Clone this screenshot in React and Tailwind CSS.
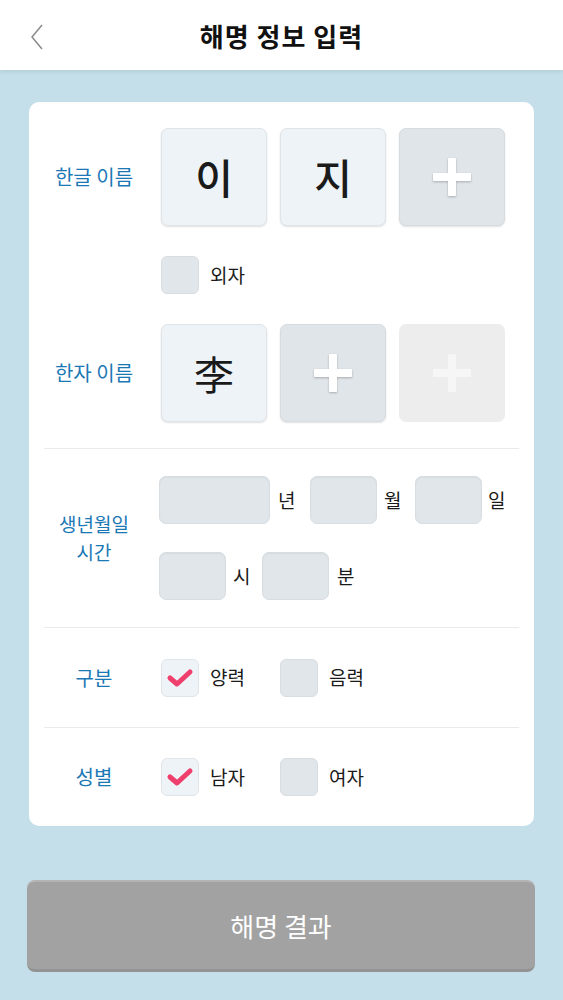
import React from 'react';

const FONT = { fontFamily: '"Noto Sans CJK KR", "Noto Sans", sans-serif' };

const PlusIcon = ({ faded }) => (
    <svg width="40" height="40" viewBox="0 0 40 40" className={faded ? '' : 'drop-shadow-[0_1px_1px_rgba(0,0,0,0.25)]'}>
        <rect x="16" y="1" width="8" height="38" rx="1" fill={faded ? '#f6f6f6' : '#ffffff'} />
        <rect x="1" y="16" width="38" height="8" rx="1" fill={faded ? '#f6f6f6' : '#ffffff'} />
    </svg>
);

const CharBox = ({ char, light }) => (
    <div className={light
        ? 'w-[106px] h-[98px] rounded-[7px] bg-[#eef3f7] border border-[#dfe4e8] shadow-[0_1px_2px_rgba(0,0,0,0.12)] flex items-center justify-center text-[40px] font-normal text-[#1a1a1a]'
        : 'w-[106px] h-[98px] rounded-[7px] bg-[#eef3f7] border border-[#dfe4e8] shadow-[0_1px_2px_rgba(0,0,0,0.12)] flex items-center justify-center text-[41px] font-medium text-[#1a1a1a]'}>
        {char}
    </div>
);

const AddBox = ({ disabled }) => (
    <div className={disabled
        ? 'w-[106px] h-[98px] rounded-[7px] bg-[#ededed] flex items-center justify-center'
        : 'w-[106px] h-[98px] rounded-[7px] bg-[#e0e5ea] border border-[#d6dbe0] shadow-[0_1px_2px_rgba(0,0,0,0.12)] flex items-center justify-center'}>
        <PlusIcon faded={disabled} />
    </div>
);

const Field = ({ w }) => (
    <div className={`${w} h-[48px] rounded-[7px] bg-[#e1e6ea] border border-[#d8dde1] shadow-[inset_0_1px_1px_rgba(0,0,0,0.05)]`} />
);

const Check = ({ checked, label }) => (
    <div className="w-[119px] flex items-center">
        <div className={checked
            ? 'w-[38px] h-[38px] rounded-[6px] bg-[#eef3f7] border border-[#e0e5e9] flex items-center justify-center'
            : 'w-[38px] h-[38px] rounded-[6px] bg-[#e1e6ea] border border-[#d8dde1]'}>
            {checked && (
                <svg width="28" height="22" viewBox="0 0 28 22">
                    <polyline points="4,11 11,17 24,5" fill="none" stroke="#ef3f6d" strokeWidth="5" strokeLinecap="round" strokeLinejoin="round" />
                </svg>
            )}
        </div>
        <span className="ml-[11px] text-[19px] text-[#1a1a1a]">{label}</span>
    </div>
);

const Label = ({ children }) => (
    <div className="w-[130px] shrink-0 text-center text-[20px] leading-[26px] text-[#1b78b5]">{children}</div>
);

const Divider = () => <div className="mx-[15px] h-px bg-[#e9ecee]" />;

export default function App() {
    return (
        <div className="w-[563px] min-h-[1000px] bg-[#c4dfea]" style={FONT}>
            {/* Header */}
            <div className="relative h-[70px] bg-white shadow-[0_2px_4px_rgba(0,0,0,0.08)] flex items-center justify-center">
                <svg className="absolute left-[30px] top-[24px]" width="14" height="26" viewBox="0 0 14 26">
                    <polyline points="12,1 2,13 12,25" fill="none" stroke="#8a8a8a" strokeWidth="1.5" />
                </svg>
                <h1 className="text-[26px] font-bold text-[#111] tracking-[1px]">해명 정보 입력</h1>
            </div>

            {/* Card */}
            <div className="mx-[29px] mt-[32px] rounded-[10px] bg-white">
                <div className="pt-[26px] pb-[26px]">
                    <div className="flex items-center">
                        <Label>한글 이름</Label>
                        <div className="ml-[2px] flex gap-[13px]">
                            <CharBox char="이" />
                            <CharBox char="지" />
                            <AddBox />
                        </div>
                    </div>
                    <div className="mt-[30px] ml-[132px] flex items-center">
                        <Check label="외자" />
                    </div>
                    <div className="mt-[30px] flex items-center">
                        <Label>한자 이름</Label>
                        <div className="ml-[2px] flex gap-[13px]">
                            <CharBox char="李" light />
                            <AddBox />
                            <AddBox disabled />
                        </div>
                    </div>
                </div>

                <Divider />

                <div className="py-[27px] flex items-center">
                    <div className="w-[130px] shrink-0 text-center text-[19px] leading-[28px] text-[#1b78b5]">
                        생년월일<br />시간
                    </div>
                    <div className="flex flex-col gap-[28px]">
                        <div className="flex items-center text-[19px] text-[#1a1a1a]">
                            <Field w="w-[111px]" />
                            <span className="ml-[8px] w-[32px]">년</span>
                            <Field w="w-[67px]" />
                            <span className="ml-[7px] w-[31px]">월</span>
                            <Field w="w-[67px]" />
                            <span className="ml-[6px]">일</span>
                        </div>
                        <div className="flex items-center text-[19px] text-[#1a1a1a]">
                            <Field w="w-[67px]" />
                            <span className="ml-[7px] w-[29px]">시</span>
                            <Field w="w-[67px]" />
                            <span className="ml-[8px]">분</span>
                        </div>
                    </div>
                </div>

                <Divider />

                <div className="h-[99px] flex items-center">
                    <Label>구분</Label>
                    <div className="ml-[2px] flex">
                        <Check checked label="양력" />
                        <Check label="음력" />
                    </div>
                </div>

                <Divider />

                <div className="h-[98px] flex items-center">
                    <Label>성별</Label>
                    <div className="ml-[2px] flex">
                        <Check checked label="남자" />
                        <Check label="여자" />
                    </div>
                </div>
            </div>

            {/* Submit */}
            <button className="mx-[27px] mt-[54px] w-[508px] h-[92px] rounded-[8px] bg-[#a2a2a2] border-t-2 border-t-[#b4b4b4] border-b-[3px] border-b-[#939393] text-white text-[26px]">
                해명 결과
            </button>
        </div>
    );
}
